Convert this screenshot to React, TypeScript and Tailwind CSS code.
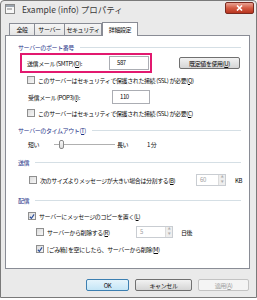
const font = { fontFamily: "'Noto Sans CJK JP', 'Noto Sans', sans-serif" }

function Key({ k }: { k: string }) {
  return (
    <>
      (<span className="underline">{k}</span>)
    </>
  )
}

function Check({ checked = false }: { checked?: boolean }) {
  return (
    <div className="w-[8px] h-[8px] shrink-0 border border-[#8f8f8f] bg-gradient-to-br from-[#dcdcdc] to-[#f7f7f7] flex items-center justify-center">
      {checked && (
        <svg width="7" height="7" viewBox="0 0 7 7">
          <path d="M1 3.8 L2.8 5.6 L6 1" stroke="#2a4d9b" strokeWidth="1.3" fill="none" />
        </svg>
      )}
    </div>
  )
}

function Header({ children }: { children: React.ReactNode }) {
  return (
    <div className="flex items-center h-[12px] pr-[8px]">
      <span className="text-[#1e3287] whitespace-nowrap">{children}</span>
      <div className="flex-1 h-px bg-[#d5dfe5] ml-[6px]" />
    </div>
  )
}

function Spinner({ value, w }: { value: string; w: string }) {
  return (
    <div className={`flex h-[12px] border border-[#c9cdd2] bg-white shrink-0 ${w}`}>
      <div className="flex-1 pl-[3px] text-[#a0a0a0] leading-[10px]">{value}</div>
      <div className="w-[7px] flex flex-col border-l border-[#dcdcdc] bg-[#eeeeee]">
        <div className="flex-1 flex items-center justify-center text-[3px] text-[#b0b0b0]">▲</div>
        <div className="flex-1 flex items-center justify-center text-[3px] text-[#b0b0b0]">▼</div>
      </div>
    </div>
  )
}

function Btn({ children, w, primary = false, disabled = false }: { children: React.ReactNode; w: string; primary?: boolean; disabled?: boolean }) {
  return (
    <div
      className={`${w} h-[12px] rounded-[2px] border flex items-center justify-center whitespace-nowrap ${
        primary
          ? "border-[#3c7fb1] bg-gradient-to-b from-[#e5f4fc] to-[#c4e5f6]"
          : disabled
          ? "border-[#c3c3c3] bg-[#f4f4f4] text-[#a0a0a0]"
          : "border-[#707070] bg-gradient-to-b from-[#f2f2f2] to-[#d5d5d5]"
      }`}
    >
      {children}
    </div>
  )
}

export default function App() {
  return (
    <div className="w-[257px] h-[300px] bg-white">
      <div
        className="w-[257px] h-[298px] border border-[#7a7a7a] rounded-t-[4px] bg-[#eaeaea] flex flex-col text-[6px] tracking-[-0.4px] text-[#0a0a0a] whitespace-nowrap"
        style={font}
      >
        {/* title bar */}
        <div className="h-[19px] flex items-start">
          <div className="mt-[3px] ml-[4px] w-[10px] h-[10px] border border-[#8a8a8a] bg-[#f7f7f7] flex flex-col">
            <div className="h-[2px] bg-[#9aa3ad]" />
            <div className="m-[1px] h-[2px] w-[5px] bg-[#bcbcbc]" />
          </div>
          <div className="ml-[7px] mt-[2px] text-[8.5px] tracking-normal text-[#3a3a3a]">Example (info) プロパティ</div>
          <div className="ml-auto mr-[2px] mt-[1px] w-[29px] h-[12px] rounded-[2px] border border-[#7a2a20] bg-gradient-to-b from-[#e8a293] via-[#d35a42] to-[#b8341f] flex items-center justify-center">
            <svg width="7" height="6" viewBox="0 0 7 6">
              <path d="M1 0.5 L6 5.5 M6 0.5 L1 5.5" stroke="white" strokeWidth="1.6" />
            </svg>
          </div>
        </div>

        {/* tabs */}
        <div className="flex items-end h-[15px] pl-[8px] relative z-10">
          <div className="w-[26px] h-[12px] border border-b-0 border-[#898c95] bg-gradient-to-b from-[#f5f5f5] to-[#e5e5e5] flex items-center justify-center">全般</div>
          <div className="w-[30px] h-[12px] border border-b-0 border-l-0 border-[#898c95] bg-gradient-to-b from-[#f5f5f5] to-[#e5e5e5] flex items-center justify-center">サーバー</div>
          <div className="w-[37px] h-[12px] border border-b-0 border-l-0 border-[#898c95] bg-gradient-to-b from-[#f5f5f5] to-[#e5e5e5] flex items-center justify-center">セキュリティ</div>
          <div className="w-[36px] h-[14px] mb-[-1px] border border-b-0 border-[#898c95] bg-white flex items-center justify-center">詳細設定</div>
        </div>

        {/* panel */}
        <div className="ml-[4px] mr-[6px] h-[234px] border border-[#898c95] bg-white flex flex-col pl-[12px]">
          <div className="mt-[5px]">
            <Header>サーバーのポート番号</Header>
          </div>
          <div className="flex items-start">
            <div className="ml-[2px] w-[132px] h-[20px] border-2 border-[#e2196f] flex items-center pl-[5px]">
              <span>送信メール (SMTP)<Key k="O" />:</span>
              <div className="ml-auto mr-[1px] w-[40px] h-[14px] border border-[#abadb3] pl-[7px] leading-[12px]">587</div>
            </div>
            <div className="ml-[27px] mt-[4px]">
              <Btn w="w-[61px]">既定値を使用<Key k="U" /></Btn>
            </div>
          </div>
          <div className="mt-[1px] h-[12px] flex items-center pl-[9px] gap-[3px]">
            <Check />
            <span>このサーバーはセキュリティで保護された接続 (SSL) が必要<Key k="Q" /></span>
          </div>
          <div className="mt-[4px] h-[14px] flex items-center pl-[10px]">
            <span className="w-[84px] shrink-0">受信メール (POP3)<Key k="I" />:</span>
            <div className="w-[38px] h-[14px] border border-[#abadb3] pl-[7px] leading-[12px]">110</div>
          </div>
          <div className="mt-[3px] h-[12px] flex items-center pl-[9px] gap-[3px]">
            <Check />
            <span>このサーバーはセキュリティで保護された接続 (SSL) が必要<Key k="C" /></span>
          </div>

          <div className="mt-[5px]">
            <Header>サーバーのタイムアウト<Key k="T" /></Header>
          </div>
          <div className="mt-[2px] h-[12px] flex items-center pl-[10px]">
            <span className="w-[12px] shrink-0">短い</span>
            <div className="ml-[14px] w-[61px] h-[10px] flex items-center">
              <div className="w-[5px] h-px bg-[#b0b0b0]" />
              <div className="w-[5px] h-[9px] rounded-[2px] border border-[#8a8a8a] bg-gradient-to-b from-[#fafafa] to-[#dcdcdc]" />
              <div className="flex-1 h-px bg-[#b0b0b0]" />
            </div>
            <span className="ml-[2px] w-[12px] shrink-0">長い</span>
            <span className="ml-[18px]">1 分</span>
          </div>

          <div className="mt-[6px]">
            <Header>送信</Header>
          </div>
          <div className="mt-[6px] h-[12px] flex items-center pl-[11px]">
            <Check />
            <span className="ml-[3px] w-[156px] shrink-0">次のサイズよりメッセージが大きい場合は分割する<Key k="B" /></span>
            <Spinner value="60" w="w-[30px]" />
            <span className="ml-[9px]">KB</span>
          </div>

          <div className="mt-[8px]">
            <Header>配信</Header>
          </div>
          <div className="mt-[4px] h-[12px] flex items-center pl-[10px] gap-[3px]">
            <Check checked />
            <span>サーバーにメッセージのコピーを置く<Key k="L" /></span>
          </div>
          <div className="mt-[4px] h-[12px] flex items-center pl-[18px]">
            <Check />
            <span className="ml-[3px] w-[89px] shrink-0">サーバーから削除する<Key k="R" /></span>
            <Spinner value="5" w="w-[37px]" />
            <span className="ml-[8px]">日後</span>
          </div>
          <div className="mt-[5px] h-[12px] flex items-center pl-[18px] gap-[3px]">
            <Check checked />
            <span>[ごみ箱] を空にしたら、サーバーから削除<Key k="M" /></span>
          </div>
        </div>

        {/* buttons */}
        <div className="mt-[10px] flex pl-[85px] gap-[6px]">
          <Btn w="w-[43px]" primary>OK</Btn>
          <Btn w="w-[57px]">キャンセル</Btn>
          <Btn w="w-[51px]" disabled>適用<Key k="A" /></Btn>
        </div>
      </div>
    </div>
  )
}
